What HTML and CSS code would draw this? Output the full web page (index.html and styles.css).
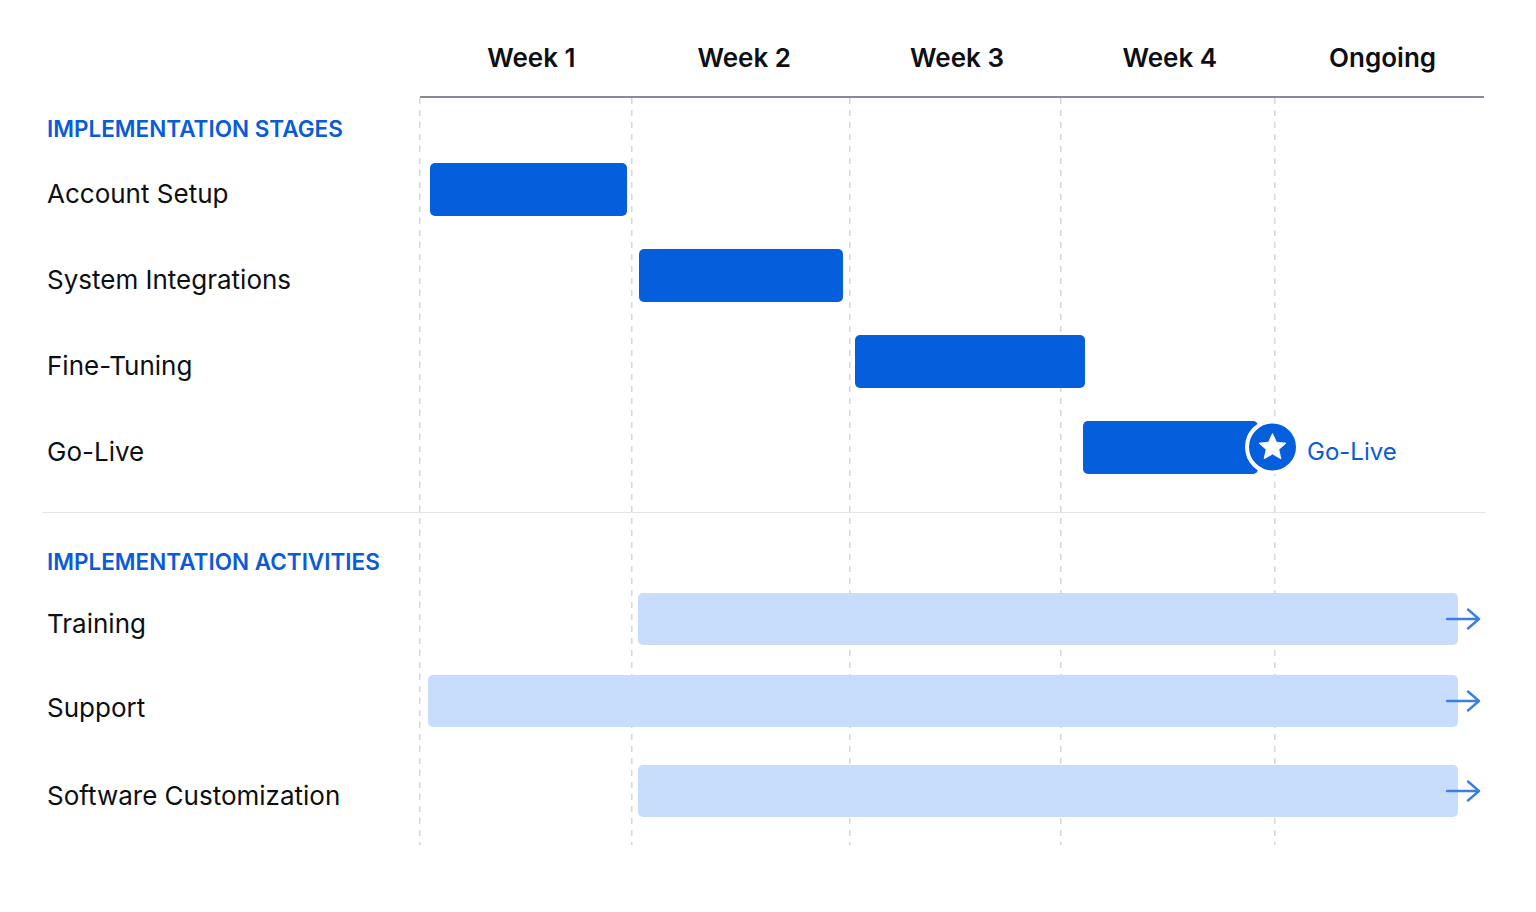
FILE: index.html
```html
<!DOCTYPE html>
<html>
<head>
<meta charset="utf-8">
<link rel="stylesheet" href="styles.css">
</head>
<body>
<div class="chart">
  <div class="header">
    <div class="hcell">Week 1</div>
    <div class="hcell">Week 2</div>
    <div class="hcell">Week 3</div>
    <div class="hcell">Week 4</div>
    <div class="hcell">Ongoing</div>
  </div>
  <div class="body">
    <div class="gridlines">
      <div class="gl"></div><div class="gl"></div><div class="gl"></div><div class="gl"></div><div class="gl"></div>
    </div>

    <div class="section-title first">IMPLEMENTATION STAGES</div>
    <div class="row stage">
      <div class="label">Account Setup</div>
      <div class="track"><div class="bar solid" style="margin-left:10px;width:197px"></div></div>
    </div>
    <div class="row stage">
      <div class="label">System Integrations</div>
      <div class="track"><div class="bar solid" style="margin-left:219px;width:204px"></div></div>
    </div>
    <div class="row stage">
      <div class="label">Fine-Tuning</div>
      <div class="track"><div class="bar solid" style="margin-left:435px;width:230px"></div></div>
    </div>
    <div class="row stage">
      <div class="label">Go-Live</div>
      <div class="track">
        <div class="bar solid" style="margin-left:663px;width:175px">
          <div class="milestone">
            <div class="star-circle">
              <svg width="33" height="33" viewBox="0 0 24 24"><path d="M12 2.2l2.9 6.3 6.9.7-5.2 4.6 1.5 6.8L12 17.1l-6.1 3.5 1.5-6.8-5.2-4.6 6.9-.7z" fill="#ffffff" stroke="#ffffff" stroke-width="0.6" stroke-linejoin="round"/></svg>
            </div>
            <span class="ms-label">Go-Live</span>
          </div>
        </div>
      </div>
    </div>

    <div class="separator"></div>

    <div class="section-title second">IMPLEMENTATION ACTIVITIES</div>
    <div class="row activity first-act">
      <div class="label">Training</div>
      <div class="track"><div class="bar light" style="margin-left:218px;width:820px"><svg class="arrow" width="36" height="24" viewBox="0 0 36 24"><path d="M1 12H33M22 2.5L33 12 22 21.5" fill="none" stroke="#3a7ee6" stroke-width="2.4" stroke-linecap="round" stroke-linejoin="round"/></svg></div></div>
    </div>
    <div class="row activity second-act">
      <div class="label">Support</div>
      <div class="track"><div class="bar light" style="margin-left:8px;width:1030px"><svg class="arrow" width="36" height="24" viewBox="0 0 36 24"><path d="M1 12H33M22 2.5L33 12 22 21.5" fill="none" stroke="#3a7ee6" stroke-width="2.4" stroke-linecap="round" stroke-linejoin="round"/></svg></div></div>
    </div>
    <div class="row activity third-act">
      <div class="label">Software Customization</div>
      <div class="track"><div class="bar light" style="margin-left:218px;width:820px"><svg class="arrow" width="36" height="24" viewBox="0 0 36 24"><path d="M1 12H33M22 2.5L33 12 22 21.5" fill="none" stroke="#3a7ee6" stroke-width="2.4" stroke-linecap="round" stroke-linejoin="round"/></svg></div></div>
    </div>
  </div>
</div>
</body>
</html>
```
FILE: styles.css
```css
html, body {
  margin: 0;
  padding: 0;
  background: #ffffff;
}
body {
  font-family: Inter, "Noto Sans", "Liberation Sans", sans-serif;
  color: #0d0f14;
  width: 1536px;
  height: 912px;
  overflow: hidden;
}
.chart {
  width: 1536px;
}
.header {
  display: flex;
  margin-left: 420px;
  width: 1064px;
  height: 96px;
  border-bottom: 2px solid #878c95;
}
.hcell {
  flex: 1 1 0;
  text-align: center;
  font-size: 26px;
  font-weight: 600;
  padding-top: 42px;
  line-height: 32px;
  padding-left: 10px;
}
.body {
  position: relative;
  padding-bottom: 9px;
}
.gridlines {
  position: absolute;
  left: 419px;
  top: 0;
  bottom: 0;
  width: 1066px;
  display: flex;
}
.gl {
  flex: none;
  background-image: repeating-linear-gradient(to bottom, #d3d6db 0 6px, transparent 6px 12px);
  background-size: 1.5px 100%;
  background-repeat: no-repeat;
  background-position: left top;
}
.gl:nth-child(1) { width: 212px; }
.gl:nth-child(2) { width: 218px; }
.gl:nth-child(3) { width: 211px; }
.gl:nth-child(4) { width: 214px; }
.gl:nth-child(5) { width: 211px; }
.section-title {
  padding-left: 47px;
  font-size: 22.5px;
  font-weight: 600;
  color: #0a5bd9;
  line-height: 30px;
  position: relative;
}
.section-title.first {
  padding-top: 16px;
  height: 32px;
}
.section-title.second {
  padding-top: 34px;
  height: 30px;
}
.row {
  display: flex;
  align-items: center;
  position: relative;
}
.row.stage { height: 86px; }
.row.activity { height: 85px; }
.row.first-act { height: 84px; }
.row.second-act { height: 85px; }
.row.third-act { height: 90px; }
.label {
  width: 373px;
  padding-left: 47px;
  font-size: 26px;
  line-height: 32px;
  padding-top: 9px;
  flex: none;
  white-space: nowrap;
}
.track {
  flex: none;
  width: 1064px;
  display: flex;
  align-items: center;
}
.bar {
  position: relative;
  border-radius: 5px;
  flex: none;
}
.bar.solid {
  height: 53px;
  background: #055fdc;
}
.bar.light {
  height: 52px;
  background: #c8ddfb;
}
.second-act .bar.light { margin-top: -5px; }
.arrow {
  position: absolute;
  right: -24px;
  top: 50%;
  margin-top: -12px;
}
.milestone {
  position: absolute;
  left: 162px;
  top: 50%;
  transform: translateY(-50%);
  display: flex;
  align-items: center;
  gap: 7px;
  white-space: nowrap;
}
.star-circle {
  flex: none;
  width: 47px;
  height: 47px;
  border-radius: 50%;
  background: #055fdc;
  border: 4px solid #ffffff;
  display: flex;
  align-items: center;
  justify-content: center;
}
.star-circle svg {
  margin-top: -1px;
}
.ms-label {
  color: #0a5bd9;
  font-size: 24px;
  line-height: 30px;
  padding-top: 8px;
}
.separator {
  margin: 22px 50px 0 42px;
  height: 1px;
  background: #e2e4e8;
  position: relative;
}
```
